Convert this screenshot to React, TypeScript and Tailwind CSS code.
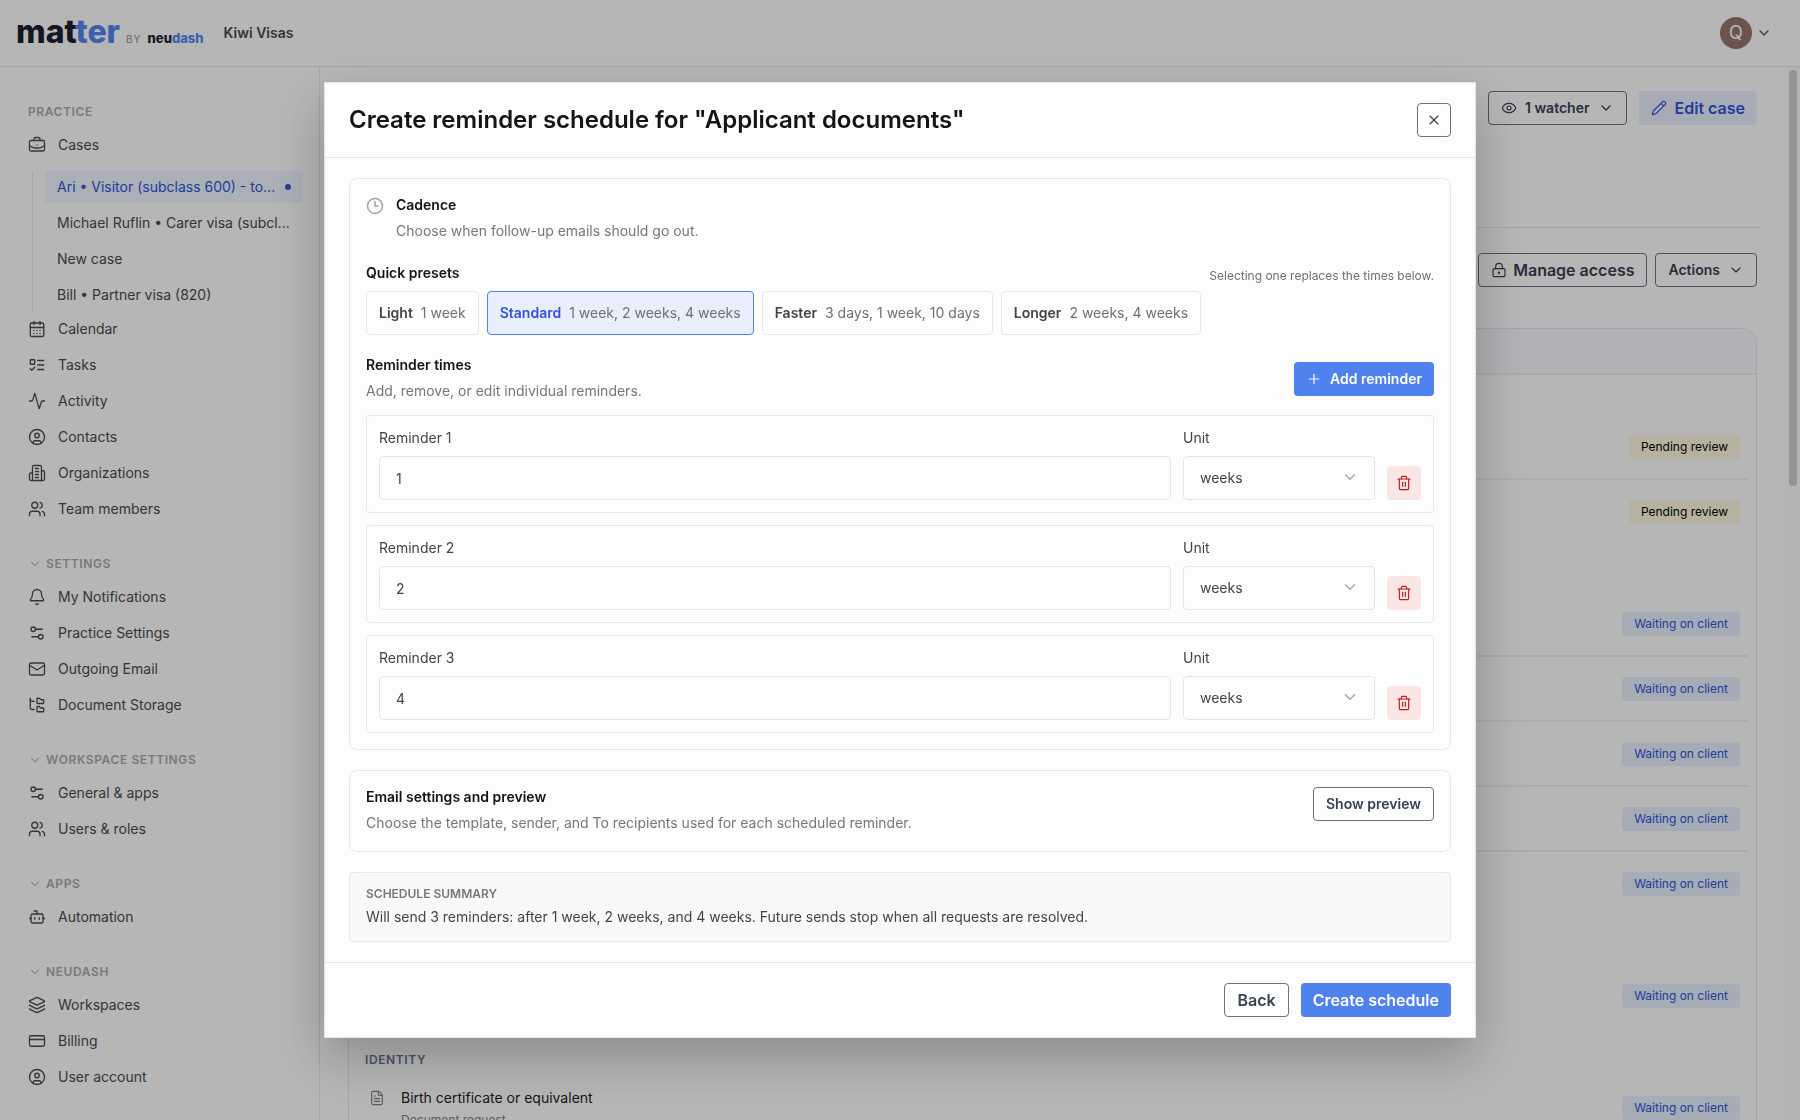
import React, { useState } from 'react';
import {
  Activity,
  Bell,
  Bot,
  BriefcaseBusiness,
  CalendarDays,
  ChevronDown,
  CircleUser,
  Clock3,
  CreditCard,
  Eye,
  FileText,
  FolderTree,
  Layers,
  LockKeyhole,
  Mail,
  Pencil,
  Plus,
  Settings2,
  Trash2,
  Users,
  X
} from 'lucide-react';

type IconType = React.ComponentType<{ size?: number; strokeWidth?: number; className?: string }>;

interface NavItem {
  label: string;
  icon: IconType;
}

interface Reminder {
  id: number;
  amount: string;
  unit: string;
}

// Icons that lucide draws differently from what we want
const makeIcon = (shapes: React.ReactNode): IconType =>
  ({ size = 18, strokeWidth = 2, className }) => (
    <svg
      width={size}
      height={size}
      viewBox="0 0 24 24"
      fill="none"
      stroke="currentColor"
      strokeWidth={strokeWidth}
      strokeLinecap="round"
      strokeLinejoin="round"
      className={className}
    >
      {shapes}
    </svg>
  );

const BuildingIcon = makeIcon(
  <>
    <path d="M6 22V4a2 2 0 0 1 2-2h8a2 2 0 0 1 2 2v18Z" />
    <path d="M6 12H4a2 2 0 0 0-2 2v6a2 2 0 0 0 2 2h2" />
    <path d="M18 9h2a2 2 0 0 1 2 2v9a2 2 0 0 1-2 2h-2" />
    <path d="M10 6h4M10 10h4M10 14h4M10 18h4" />
  </>
);

const TasksIcon = makeIcon(
  <>
    <rect x="3" y="5" width="6" height="6" rx="1" />
    <path d="m3 17 2 2 4-4" />
    <path d="M13 6h8M13 12h8M13 18h8" />
  </>
);

const PRACTICE_ITEMS: NavItem[] = [
  { label: 'Calendar', icon: CalendarDays },
  { label: 'Tasks', icon: TasksIcon },
  { label: 'Activity', icon: Activity },
  { label: 'Contacts', icon: CircleUser },
  { label: 'Organizations', icon: BuildingIcon },
  { label: 'Team members', icon: Users }
];

const SECTIONS: { title: string; items: NavItem[] }[] = [
  {
    title: 'SETTINGS',
    items: [
      { label: 'My Notifications', icon: Bell },
      { label: 'Practice Settings', icon: Settings2 },
      { label: 'Outgoing Email', icon: Mail },
      { label: 'Document Storage', icon: FolderTree }
    ]
  },
  {
    title: 'WORKSPACE SETTINGS',
    items: [
      { label: 'General & apps', icon: Settings2 },
      { label: 'Users & roles', icon: Users }
    ]
  },
  { title: 'APPS', items: [{ label: 'Automation', icon: Bot }] },
  {
    title: 'NEUDASH',
    items: [
      { label: 'Workspaces', icon: Layers },
      { label: 'Billing', icon: CreditCard },
      { label: 'User account', icon: CircleUser }
    ]
  }
];

const CASES = [
  'Ari • Visitor (subclass 600) - to...',
  'Michael Ruflin • Carer visa (subcl...',
  'New case',
  'Bill • Partner visa (820)'
];

const PRESETS = [
  { name: 'Light', detail: '1 week', times: ['1'] },
  { name: 'Standard', detail: '1 week, 2 weeks, 4 weeks', times: ['1', '2', '4'] },
  { name: 'Faster', detail: '3 days, 1 week, 10 days', times: ['3', '1', '10'] },
  { name: 'Longer', detail: '2 weeks, 4 weeks', times: ['2', '4'] }
];

// Request groups on the case page, one status per row
const GROUPS: { title: string; rows: { name: string; status: string }[] }[] = [
  {
    title: '',
    rows: [
      { name: '', status: 'Pending review' },
      { name: '', status: 'Pending review' }
    ]
  },
  {
    title: '',
    rows: [
      { name: '', status: 'Waiting on client' },
      { name: '', status: 'Waiting on client' },
      { name: '', status: 'Waiting on client' },
      { name: '', status: 'Waiting on client' },
      { name: '', status: 'Waiting on client' }
    ]
  },
  { title: '', rows: [{ name: '', status: 'Waiting on client' }] },
  { title: 'IDENTITY', rows: [{ name: 'Birth certificate or equivalent', status: 'Waiting on client' }] }
];

const OUTLINE_BUTTON = 'flex h-[34px] items-center justify-center rounded border border-[#6b7280] px-3 font-semibold text-[#374151]';

const NavLink: React.FC<{ item: NavItem }> = ({ item }) => {
  const Icon = item.icon;
  return (
    <a href="#" className="flex h-8 items-center gap-3">
      <Icon size={18} strokeWidth={1.75} className="shrink-0" />
      {item.label}
    </a>
  );
};

const Sidebar: React.FC = () => (
  <nav className="w-80 shrink-0 border-r border-[#e5e5e5] px-7 pt-[34px] text-sm text-[#4a4a4a]">
    <h2 className="mb-1.5 text-xs leading-[22px] font-semibold tracking-wider text-[#a8a8a8]">PRACTICE</h2>
    <NavLink item={{ label: 'Cases', icon: BriefcaseBusiness }} />
    <div className="mt-2.5 mb-0.5 -mr-3 ml-1 flex flex-col gap-1 border-l border-[#e5e5e5] pl-3">
      {CASES.map((name, i) => (
        <a
          key={name}
          href="#"
          className={`flex h-8 items-center justify-between rounded px-3 whitespace-nowrap ${i === 0 ? 'bg-[#edf3fd] text-[#2f54d8]' : ''}`}
        >
          {name}
          {i === 0 && <span className="size-1.5 shrink-0 rounded-full bg-[#2f54d8]" />}
        </a>
      ))}
    </div>
    <div className="flex flex-col gap-1">
      {PRACTICE_ITEMS.map((item) => (
        <NavLink key={item.label} item={item} />
      ))}
    </div>
    {SECTIONS.map((section) => (
      <section key={section.title} className="mt-7">
        <h2 className="mb-1.5">
          <button className="flex items-center gap-1 text-xs leading-[22px] font-semibold tracking-wider text-[#a8a8a8]">
            <ChevronDown size={14} strokeWidth={1.75} />
            {section.title}
          </button>
        </h2>
        <div className="flex flex-col gap-1">
          {section.items.map((item) => (
            <NavLink key={item.label} item={item} />
          ))}
        </div>
      </section>
    ))}
  </nav>
);

const Header: React.FC = () => (
  <header className="flex h-[67px] shrink-0 items-center justify-between border-b border-[#e5e5e5] pr-7 pl-4">
    <div className="flex items-center">
      <a href="#" className="mt-1 flex items-baseline leading-10 font-extrabold text-[#1a2030]">
        <span className="text-[32px]">
          mat<span className="text-[#5585ef]">ter</span>
        </span>
        <span className="mx-1.5 text-[10px] font-medium tracking-widest text-[#a0a0a0]">BY</span>
        <span className="text-[13px]">
          neu<span className="text-[#5585ef]">dash</span>
        </span>
      </a>
      <span className="ml-5 text-sm font-semibold text-[#4a4a4a]">Kiwi Visas</span>
    </div>
    <button className="flex items-center gap-1" aria-label="Account menu">
      <span className="flex size-8 items-center justify-center rounded-full bg-[#947569] text-lg text-white">Q</span>
      <ChevronDown size={16} className="text-[#525252]" />
    </button>
  </header>
);

const CasePage: React.FC = () => (
  <main className="relative min-w-0 flex-1 overflow-hidden pr-[43px] pl-7">
    <div className="-mx-1 flex h-[161px] items-start justify-end gap-3 border-b border-[#e5e5e5] px-1 pt-6">
      <button className={`${OUTLINE_BUTTON} gap-2 text-sm`}>
        <Eye size={16} strokeWidth={1.75} />
        1 watcher
        <ChevronDown size={16} />
      </button>
      <button className="flex h-[34px] items-center gap-2 rounded bg-[#e7edfc] px-3 font-semibold text-[#2f54d8]">
        <Pencil size={16} strokeWidth={1.75} />
        Edit case
      </button>
    </div>
    <div className="flex justify-end gap-2 pt-[25px]">
      <button className={`${OUTLINE_BUTTON} gap-1.5`}>
        <LockKeyhole size={16} strokeWidth={1.75} />
        Manage access
      </button>
      <button className={`${OUTLINE_BUTTON} gap-2 text-sm`}>
        Actions
        <ChevronDown size={16} strokeWidth={1.75} />
      </button>
    </div>
    <div className="mt-[41px] rounded-t-2xl border border-[#e2e4ee] pb-20">
      <div className="h-[46px] rounded-t-2xl border-b-2 border-[#ececf2] bg-[#f7f7fc]" />
      {GROUPS.map((group, i) => (
        <section key={i} className="px-2">
          <h3 className={`flex items-end pb-2 pl-2 text-xs leading-4 font-semibold tracking-wider text-[#64748b] ${i === 0 ? 'h-10' : 'h-[49px]'}`}>
            {group.title}
          </h3>
          <ul className="divide-y-2 divide-[#eeeeee]">
            {group.rows.map((row, j) => (
              <li key={j} className="flex h-[65px] items-center justify-between px-2 last:h-[63px]">
                {row.name ? (
                  <div className="flex gap-4">
                    <FileText size={16} strokeWidth={1.75} className="mt-1 ml-1 text-[#808080]" />
                    <div>
                      <p className="text-sm leading-6 text-[#1c1c1c]">{row.name}</p>
                      <p className="text-xs leading-5 text-[#808080]">Document request</p>
                    </div>
                  </div>
                ) : (
                  <span />
                )}
                <span
                  className={`flex h-6 items-center rounded px-3 text-xs ${
                    row.status === 'Pending review' ? 'bg-[#fef6df] text-black' : 'bg-[#e7edfc] text-[#2f54d8]'
                  }`}
                >
                  {row.status}
                </span>
              </li>
            ))}
          </ul>
        </section>
      ))}
    </div>
    {/* Scrollbar track and thumb */}
    <div className="absolute inset-y-0 right-0 w-[15px] bg-[#f8f8f8] px-1 pt-[3px]">
      <div className="h-[416px] w-2 rounded-full bg-[#cccccc]" />
    </div>
  </main>
);

const UnitSelect: React.FC<{ id: string; value: string; onChange: (unit: string) => void }> = ({ id, value, onChange }) => (
  <div className="relative">
    <select
      id={id}
      value={value}
      onChange={(e) => onChange(e.target.value)}
      className="h-11 w-full appearance-none rounded border border-[#e5e5e5] px-4"
    >
      <option>days</option>
      <option>weeks</option>
    </select>
    <ChevronDown size={18} strokeWidth={1.75} className="pointer-events-none absolute top-3 right-4 text-[#a3a3a3]" />
  </div>
);

const ReminderDialog: React.FC = () => {
  const [preset, setPreset] = useState('Standard');
  const [reminders, setReminders] = useState<Reminder[]>([
    { id: 1, amount: '1', unit: 'weeks' },
    { id: 2, amount: '2', unit: 'weeks' },
    { id: 3, amount: '4', unit: 'weeks' }
  ]);

  const choosePreset = (name: string, times: string[]) => {
    setPreset(name);
    setReminders(
      times.map((amount, i) => ({
        id: i + 1,
        amount,
        unit: name === 'Faster' && i !== 1 ? 'days' : 'weeks'
      }))
    );
  };

  const update = (id: number, patch: Partial<Reminder>) =>
    setReminders((list) => list.map((r) => (r.id === id ? { ...r, ...patch } : r)));

  const addReminder = () =>
    setReminders((list) => [...list, { id: Math.max(0, ...list.map((r) => r.id)) + 1, amount: '1', unit: 'weeks' }]);

  return (
    <div
      role="dialog"
      aria-modal="true"
      aria-labelledby="dialog-title"
      className="w-full max-w-6xl border border-[#e5e5e5] bg-[#fdfdfd] text-sm text-[#444444] shadow-[0_20px_50px_rgba(0,0,0,0.25)]"
    >
      <div className="flex items-center justify-between border-b border-[#e8e8e8] px-6 py-5">
        <h1 id="dialog-title" className="text-2xl leading-8 font-semibold text-[#141414]">
          Create reminder schedule for "Applicant documents"
        </h1>
        <button aria-label="Close" className="flex size-[34px] items-center justify-center rounded border border-[#6b7280] text-[#374151]">
          <X size={16} strokeWidth={1.75} />
        </button>
      </div>

      <div className="flex flex-col gap-5 px-6 py-5">
        <section className="rounded-lg border border-[#e8e8e8] p-4">
          <div className="flex gap-3">
            <Clock3 size={18} className="mt-0.5 text-[#a3a3a3]" />
            <div>
              <h2 className="leading-5 font-semibold text-[#141414]">Cadence</h2>
              <p className="mt-1 leading-6 text-[#777777]">Choose when follow-up emails should go out.</p>
            </div>
          </div>

          <div className="mt-5 flex items-end justify-between">
            <h3 className="leading-5 font-semibold text-[#141414]">Quick presets</h3>
            <p className="text-xs leading-[14px] text-[#707070]">Selecting one replaces the times below.</p>
          </div>
          <div className="mt-2 flex gap-2">
            {PRESETS.map((p) => (
              <button
                key={p.name}
                onClick={() => choosePreset(p.name, p.times)}
                className={`flex h-11 items-center gap-2 rounded border px-3 ${
                  p.name === preset ? 'border-[#4f82ee] bg-[#e8eefc] text-[#2f54d8]' : 'border-[#e8e8e8]'
                }`}
              >
                <span className="font-semibold">{p.name}</span>
                <span className="text-[#707070]">{p.detail}</span>
              </button>
            ))}
          </div>

          <div className="mt-5 flex items-center justify-between">
            <div>
              <h3 className="leading-5 font-semibold text-[#141414]">Reminder times</h3>
              <p className="mt-1 leading-6 text-[#777777]">Add, remove, or edit individual reminders.</p>
            </div>
            <button onClick={addReminder} className="flex h-[34px] items-center gap-2 rounded bg-[#4f82ee] px-3 font-semibold text-white">
              <Plus size={16} strokeWidth={1.75} />
              Add reminder
            </button>
          </div>

          <div className="mt-3 flex flex-col gap-3">
            {reminders.map((r, i) => (
              <div key={r.id} className="flex items-end gap-3 rounded border border-[#e8e8e8] p-3">
                <div className="flex-1">
                  <label htmlFor={`amount-${r.id}`} className="mb-2 block leading-5">
                    Reminder {i + 1}
                  </label>
                  <input
                    id={`amount-${r.id}`}
                    type="text"
                    inputMode="numeric"
                    value={r.amount}
                    onChange={(e) => update(r.id, { amount: e.target.value })}
                    className="block h-11 w-full rounded border border-[#e5e5e5] px-4"
                  />
                </div>
                <div className="w-48">
                  <label htmlFor={`unit-${r.id}`} className="mb-2 block leading-5">
                    Unit
                  </label>
                  <UnitSelect id={`unit-${r.id}`} value={r.unit} onChange={(unit) => update(r.id, { unit })} />
                </div>
                <button
                  aria-label={`Remove reminder ${i + 1}`}
                  onClick={() => setReminders((list) => list.filter((x) => x.id !== r.id))}
                  className="flex size-[34px] items-center justify-center rounded bg-[#fbe6e6] text-[#b91c1c]"
                >
                  <Trash2 size={16} strokeWidth={1.75} />
                </button>
              </div>
            ))}
          </div>
        </section>

        <section className="flex items-start justify-between rounded-lg border border-[#e8e8e8] p-4">
          <div>
            <h2 className="leading-5 font-semibold text-[#141414]">Email settings and preview</h2>
            <p className="mt-1 leading-6 text-[#777777]">
              Choose the template, sender, and To recipients used for each scheduled reminder.
            </p>
          </div>
          <button className={OUTLINE_BUTTON}>Show preview</button>
        </section>

        <section className="rounded border border-[#e8e8e8] bg-[#f8f8f8] px-4 py-3">
          <h2 className="text-xs leading-[18px] font-semibold text-[#777777]">SCHEDULE SUMMARY</h2>
          <p className="mt-0.5 leading-6">
            Will send 3 reminders: after 1 week, 2 weeks, and 4 weeks. Future sends stop when all requests are resolved.
          </p>
        </section>
      </div>

      <div className="flex justify-end gap-3 border-t border-[#e8e8e8] px-6 py-5">
        <button className={`${OUTLINE_BUTTON} text-base`}>Back</button>
        <button className="flex h-[34px] items-center rounded bg-[#4f82ee] px-3 text-base font-semibold text-white">
          Create schedule
        </button>
      </div>
    </div>
  );
};

export default function App() {
  return (
    <div className="flex h-screen flex-col overflow-hidden bg-[#fdfdfd] font-['Inter','Liberation_Sans',sans-serif]">
      <Header />
      <div className="flex min-h-0 flex-1">
        <Sidebar />
        <CasePage />
      </div>
      <div className="fixed inset-0 flex items-center justify-center bg-black/28">
        <ReminderDialog />
      </div>
    </div>
  );
}
